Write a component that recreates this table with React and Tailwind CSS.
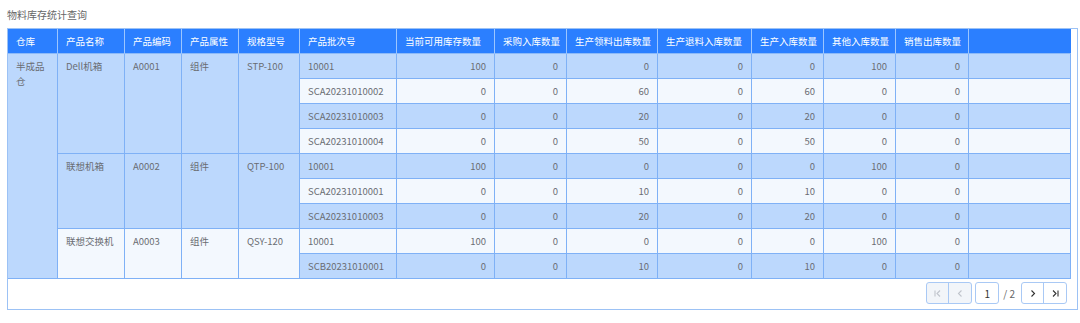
import React from "react";

const widths = [50, 67, 57, 57, 61, 97, 98, 72, 91, 94, 72, 72, 73, 102];
const headers = ["仓库", "产品名称", "产品编码", "产品属性", "规格型号", "产品批次号", "当前可用库存数量", "采购入库数量", "生产领料出库数量", "生产退料入库数量", "生产入库数量", "其他入库数量", "销售出库数量", ""];

const rows = [
  { batch: "10001", v: [100, 0, 0, 0, 0, 100, 0] },
  { batch: "SCA20231010002", v: [0, 0, 60, 0, 60, 0, 0] },
  { batch: "SCA20231010003", v: [0, 0, 20, 0, 20, 0, 0] },
  { batch: "SCA20231010004", v: [0, 0, 50, 0, 50, 0, 0] },
  { batch: "10001", v: [100, 0, 0, 0, 0, 100, 0] },
  { batch: "SCA20231010001", v: [0, 0, 10, 0, 10, 0, 0] },
  { batch: "SCA20231010003", v: [0, 0, 20, 0, 20, 0, 0] },
  { batch: "10001", v: [100, 0, 0, 0, 0, 100, 0] },
  { batch: "SCB20231010001", v: [0, 0, 10, 0, 10, 0, 0] },
];

const groups = {
  0: { span: 4, cells: ["Dell机箱", "A0001", "组件", "STP-100"] },
  4: { span: 3, cells: ["联想机箱", "A0002", "组件", "QTP-100"] },
  7: { span: 2, cells: ["联想交换机", "A0003", "组件", "QSY-120"] },
};

const dark = "bg-[#bcd8fd]";
const light = "bg-[#f3f8fe]";
const cellBase = "border-r border-b border-[#7fb1f6] h-[25px] p-0 leading-[15px]";

function FirstIcon({ color }) {
  return (
    <svg width="9" height="9" viewBox="0 0 9 9" fill="none" stroke={color} strokeWidth="1.1">
      <path d="M2 1.5v6" />
      <path d="M7 1.5L4 4.5l3 3" />
    </svg>
  );
}
function PrevIcon({ color }) {
  return (
    <svg width="9" height="9" viewBox="0 0 9 9" fill="none" stroke={color} strokeWidth="1.1">
      <path d="M5.5 1.5L2.5 4.5l3 3" />
    </svg>
  );
}
function NextIcon({ color }) {
  return (
    <svg width="9" height="9" viewBox="0 0 9 9" fill="none" stroke={color} strokeWidth="1.1">
      <path d="M3.5 1.5l3 3-3 3" />
    </svg>
  );
}
function LastIcon({ color }) {
  return (
    <svg width="9" height="9" viewBox="0 0 9 9" fill="none" stroke={color} strokeWidth="1.1">
      <path d="M2 1.5l3 3-3 3" />
      <path d="M7 1.5v6" />
    </svg>
  );
}

export default function App() {
  return (
    <div
      className="w-[1080px] h-[323px] bg-white text-[#6a6d73]"
      style={{ fontFamily: '"Noto Sans CJK SC", "Noto Sans", sans-serif' }}
    >
      <div className="h-[28px] pl-[7px] flex items-center text-[10px] text-[#666]">物料库存统计查询</div>
      <div className="ml-[7px] w-[1071px] border border-[#9cc2f5]">
        <div className="pr-[5px]">
          <table className="border-separate border-spacing-0 table-fixed w-[1063px] text-[9.5px]">
            <colgroup>
              {widths.map((w, i) => (
                <col key={i} style={{ width: w }} />
              ))}
            </colgroup>
            <thead>
              <tr>
                {headers.map((h, i) => (
                  <th
                    key={i}
                    className={`bg-[#2b7fff] text-white font-normal text-left px-[8px] h-[25px] leading-[15px] border-b border-[#8dbaf8] ${i < headers.length - 1 ? "border-r border-r-[#9cc6ff]" : ""} whitespace-nowrap`}
                  >
                    {h}
                  </th>
                ))}
              </tr>
            </thead>
            <tbody>
              {rows.map((r, ri) => {
                const bg = ri % 2 === 0 ? dark : light;
                const g = groups[ri];
                return (
                  <tr key={ri}>
                    {ri === 0 && (
                      <td rowSpan={9} className={`${cellBase} ${dark} align-top px-[8px] pt-[5px]`}>
                        半成品仓
                      </td>
                    )}
                    {g &&
                      g.cells.map((c, ci) => (
                        <td key={ci} rowSpan={g.span} className={`${cellBase} ${bg} align-top px-[8px] pt-[5px] whitespace-nowrap`}>
                          {c}
                        </td>
                      ))}
                    <td className={`${cellBase} ${bg} px-[8px] whitespace-nowrap`}>{r.batch}</td>
                    {r.v.map((v, vi) => (
                      <td key={vi} className={`${cellBase} ${bg} text-right pr-[8px]`}>
                        {v}
                      </td>
                    ))}
                    <td className={`${cellBase} ${bg}`}></td>
                  </tr>
                );
              })}
            </tbody>
          </table>
        </div>
        <div className="h-[30px] flex items-start justify-end pt-[3px] pr-[10px] text-[9.5px]">
          <div className="flex h-[22px] rounded-[3px] border border-[#a9c9f5] bg-[#f2f5f9] overflow-hidden">
            <div className="w-[22px] flex items-center justify-center border-r border-[#a9c9f5]">
              <FirstIcon color="#c0c4cc" />
            </div>
            <div className="w-[22px] flex items-center justify-center">
              <PrevIcon color="#c0c4cc" />
            </div>
          </div>
          <div className="ml-[3px] w-[24px] h-[22px] rounded-[3px] border border-[#a9c9f5] bg-white flex items-center justify-center text-[#333] text-[10px]">
            1
          </div>
          <div className="ml-[4px] mr-[6px] h-[22px] flex items-center text-[#666] text-[10px]">/ 2</div>
          <div className="flex h-[22px] rounded-[3px] border border-[#a9c9f5] bg-white overflow-hidden">
            <div className="w-[22px] flex items-center justify-center border-r border-[#a9c9f5]">
              <NextIcon color="#333" />
            </div>
            <div className="w-[22px] flex items-center justify-center">
              <LastIcon color="#333" />
            </div>
          </div>
        </div>
      </div>
    </div>
  );
}
